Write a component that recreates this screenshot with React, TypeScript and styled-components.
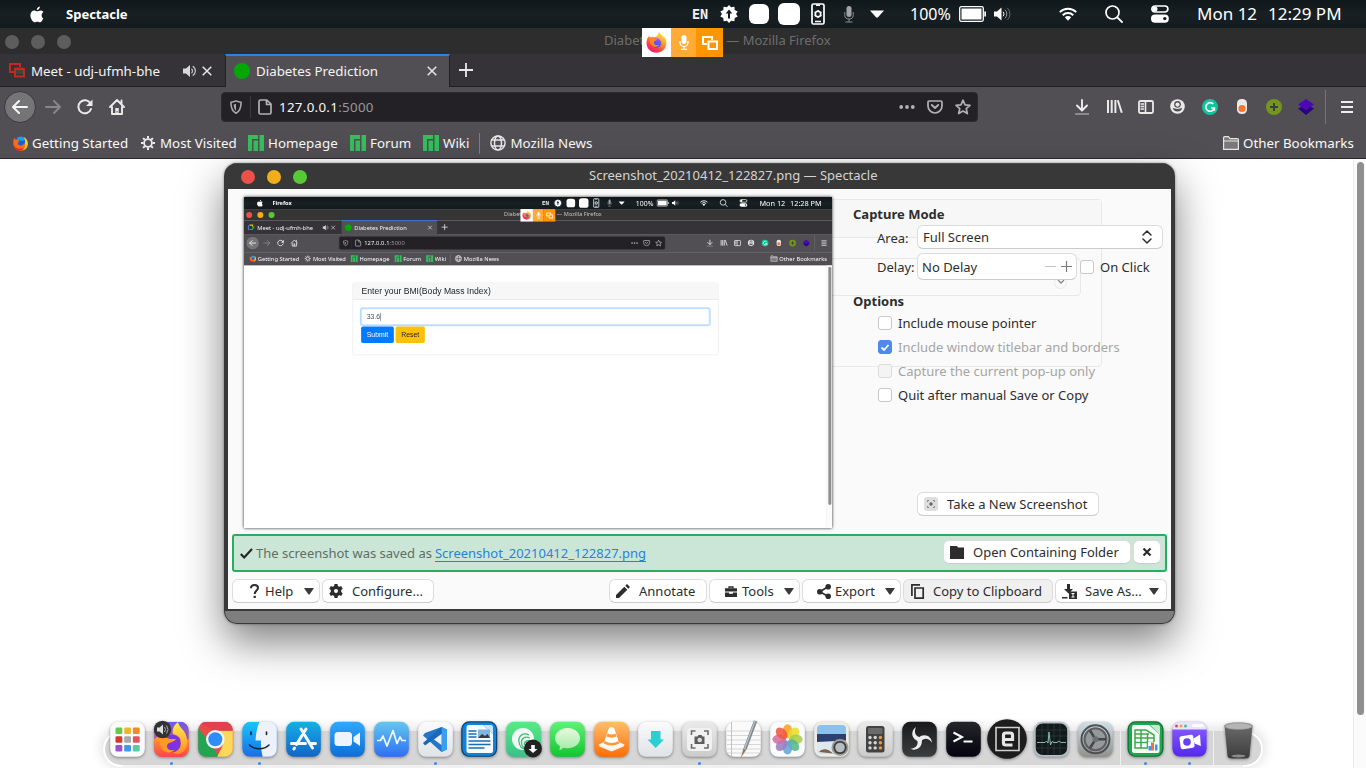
import React from "react";
import styled, { createGlobalStyle, css } from "styled-components";

const GlobalStyle = createGlobalStyle`
  *, *::before, *::after { box-sizing: border-box; }
  html, body { margin: 0; padding: 0; background: #fff; overflow: hidden; }
  body { font-family: "Noto Sans", "Open Sans", sans-serif; font-size: 13.33px; }
`;

/* ---------- shared primitives ---------- */

const Screen = styled.div`
  position: relative;
  width: 1366px;
  height: 768px;
  overflow: hidden;
  display: flex;
  flex-direction: column;
  background: #fff;
  font-family: "Noto Sans", "Open Sans", sans-serif;
  font-size: 13.33px;
`;

const Label = styled.span<{ $w?: number; $ml?: number; $ls?: number; $c?: string; $b?: boolean; $size?: number }>`
  flex: none;
  white-space: pre;
  line-height: 18px;
  width: ${(p) => (p.$w ? `${p.$w}px` : "auto")};
  margin-left: ${(p) => p.$ml ?? 0}px;
  letter-spacing: ${(p) => p.$ls ?? 0}px;
  color: ${(p) => p.$c ?? "inherit"};
  font-weight: ${(p) => (p.$b ? 700 : 400)};
  font-size: ${(p) => (p.$size ? `${p.$size}px` : "inherit")};
`;

const Svg = styled.svg<{ $ml?: number }>`
  flex: none;
  display: block;
  overflow: visible;
  margin-left: ${(p) => p.$ml ?? 0}px;
`;

type IconProps = { w: number; h: number; ml?: number; children: React.ReactNode };
const Icon = ({ w, h, ml, children }: IconProps) => (
  <Svg width={w} height={h} viewBox={`0 0 ${w} ${h}`} $ml={ml} fill="none">
    {children}
  </Svg>
);

const Divider = styled.i<{ $h: number; $ml: number; $c: string }>`
  flex: none;
  width: 1px;
  height: ${(p) => p.$h}px;
  margin-left: ${(p) => p.$ml}px;
  background: ${(p) => p.$c};
`;

/* ---------- system menu bar ---------- */

const MenuBarRow = styled.header`
  flex: none;
  height: 28px;
  display: flex;
  align-items: center;
  color: #fff;
  background: linear-gradient(#10171a, #182024 50%, #141b1e);
`;

const LangTag = styled.span`
  flex: none;
  width: 16px;
  margin-left: auto;
  font: 700 13.5px/18px "DejaVu Sans Mono", monospace;
  letter-spacing: -0.1px;
  color: #f2f2f2;
`;

const WhiteTile = styled.i<{ $s: number; $ml: number }>`
  flex: none;
  width: ${(p) => p.$s}px;
  height: ${(p) => p.$s}px;
  margin-left: ${(p) => p.$ml}px;
  border-radius: 6px;
  background: #fff;
`;

const MenuBar = ({ app, time }: { app: string; time: string }) => (
  <MenuBarRow>
    <Icon w={14} h={17} ml={30}>
      <path fill="#fff" d="M9.9.5c.1 1.9-1.300 3.500-3.100 3.600C6.600 2.300 8.100.7 9.900.5zM13.300 12.300c-.8 2.100-2 4-3.200 4-1 0-1.400-.6-2.700-.6s-1.700.6-2.700.6C3.100 16.300.4 12.800.4 9.200c0-3 1.900-4.700 3.700-4.700 1.300 0 2.200.8 3.100.8.8 0 1.900-.9 3.400-.9 1 0 2.100.5 2.800 1.500-2.500 1.500-2.100 5.300-.1 6.400z" />
    </Icon>
    <Label $ml={22} $w={64} $b $size={13}>{app}</Label>
    <LangTag>EN</LangTag>
    <Icon w={18} h={18} ml={12}>
      <path fill="#fff" d="M9 0l2.100 2.300 3.300-.5.3 3.200 3 1.400L16 9l1.700 2.600-3 1.400-.3 3.200-3.300-.5L9 18l-2.100-2.300-3.300.5-.3-3.200-3-1.400L2 9 .3 6.400l3-1.400.3-3.200 3.300.5z" />
      <path fill="#141b1e" d="M9 4.500l3.300 4H10v5H8v-5H5.700z" />
    </Icon>
    <WhiteTile $s={20} $ml={11} />
    <WhiteTile $s={22} $ml={9} />
    <Icon w={14} h={22} ml={11}>
      <rect x="1" y="1" width="12" height="20" rx="1.500" stroke="#fff" strokeWidth="1.700" />
      <circle cx="7" cy="11" r="2.700" stroke="#fff" strokeWidth="1.600" />
      <path stroke="#fff" strokeWidth="1.400" d="M4 18.500h6M5 2.200h4M7 7v1.500M7 13.500V15M3.600 9l1.300.8M9.200 12.200l1.300.8M3.600 13l1.300-.8M9.200 9.800l1.300-.8" />
    </Icon>
    <Icon w={10} h={17} ml={19}>
      <rect x="2.500" y="0" width="5" height="11" rx="2.500" fill="#a3a5a6" />
      <path stroke="#8a8d8e" d="M.8 6v3.500a4.200 3.500 0 0 0 8.400 0V6M5 13v3M1.500 16h7" />
    </Icon>
    <Icon w={14} h={8} ml={16}><path fill="#fff" d="M0 .5h14L8 7.200q-1 .9-2 0z" /></Icon>
    <Label $ml={26} $w={42} $size={16}>100%</Label>
    <Icon w={27} h={16} ml={7}>
      <rect x=".7" y=".7" width="23.600" height="14.600" rx="1.500" stroke="#fff" strokeWidth="1.300" />
      <rect x="2.500" y="2.500" width="20" height="11" fill="#fff" />
      <path fill="#fff" d="M25.300 5.500h1.700v5h-1.700z" />
    </Icon>
    <Icon w={17} h={14} ml={8}>
      <path fill="#fff" d="M0 4.500h3L7.500.5v13L3 9.500H0z" />
      <path stroke="#fff" d="M9 4.700a3.300 3.300 0 0 1 0 4.600" />
      <path stroke="#9b9fa1" d="M11 2.700a6 6 0 0 1 0 8.600" />
      <path stroke="#666c6e" d="M13.400 1a8.500 8.500 0 0 1 0 12" />
    </Icon>
    <Icon w={18} h={14} ml={48}>
      <path stroke="#fff" strokeWidth="2" d="M.8 5.100a11.800 11.800 0 0 1 16.400 0M3.700 8.200a7.600 7.600 0 0 1 10.600 0" />
      <path fill="#fff" d="M5.800 10.300a4.600 4.600 0 0 1 6.400 0L9 13.800z" />
    </Icon>
    <Icon w={18} h={18} ml={28}>
      <circle cx="7.500" cy="7.500" r="6.500" stroke="#fff" strokeWidth="1.700" />
      <path stroke="#fff" strokeWidth="1.900" d="M12.300 12.300l5.300 5.300" />
    </Icon>
    <Icon w={18} h={18} ml={28}>
      <rect x=".9" y="1" width="16" height="6" rx="3" stroke="#fff" strokeWidth="1.700" />
      <circle cx="4" cy="4" r="2.500" fill="#fff" />
      <rect x="0" y="9.500" width="17.800" height="8.300" rx="4.100" fill="#fff" />
      <circle cx="13.800" cy="13.600" r="1.700" fill="#141b1e" />
    </Icon>
    <Label $ml={28} $w={71} $size={17}>Mon 12</Label>
    <Label $w={98} $size={17}>{time}</Label>
  </MenuBarRow>
);

/* ---------- browser ---------- */

const TitleBar = styled.div<{ $active: boolean }>`
  flex: none;
  height: 26px;
  display: flex;
  align-items: center;
  padding-left: 5px;
  gap: 12px;
  color: ${(p) => (p.$active ? "#c4c4c4" : "#6d6d6d")};
  background: ${(p) => (p.$active ? "#353535" : "#2d2d2d")};
`;

const Dot = styled.i<{ $c: string }>`
  flex: none;
  width: 14px;
  height: 14px;
  border-radius: 50%;
  background: ${(p) => p.$c};
  margin-top: 1px;
`;

const WinTitle = styled.div`
  flex: 1;
  padding: 0 0 2px 521px;
  font-size: 13px;
  line-height: 18px;
  white-space: nowrap;
  display: flex;
`;

const TabStrip = styled.div`
  flex: none;
  height: 33px;
  display: flex;
  align-items: stretch;
  background: #353338;
  border-bottom: 1px solid #222025;
  color: #f4f4f5;
`;

const Tab = styled.div<{ $active?: boolean }>`
  width: 225px;
  height: 33px;
  display: flex;
  align-items: center;
  padding-left: 9px;
  ${(p) =>
    p.$active &&
    css`
      background: #514f54;
      border-top: 2px solid #2f7fe8;
      border-left: 1px solid #222025;
      border-right: 1px solid #222025;
      padding-left: 8px;
      padding-bottom: 2px;
    `}
`;

const NavBar = styled.div`
  flex: none;
  height: 41px;
  display: flex;
  align-items: center;
  padding-bottom: 2px;
  background: #514f54;
  color: #f4f4f5;
`;

const BackButton = styled.div`
  flex: none;
  width: 32px;
  height: 32px;
  margin-left: 4px;
  border-radius: 50%;
  background: #757477;
  border: 1px solid #3a383c;
  display: flex;
  align-items: center;
  justify-content: center;
`;

const UrlBar = styled.div`
  flex: none;
  width: 757px;
  height: 30px;
  margin-left: 96px;
  display: flex;
  align-items: center;
  border-radius: 4px;
  background: #232126;
  border: 1px solid #2d2b31;
`;

const BookmarkBar = styled.div`
  flex: none;
  height: 31px;
  display: flex;
  align-items: center;
  background: #514f54;
  border-bottom: 1px solid #2a282c;
  color: #fafafa;
`;

const Page = styled.main`
  flex: 1;
  display: flex;
  justify-content: space-between;
  background: #fff;
`;

const ScrollTrack = styled.div`
  width: 13px;
  padding: 3px 2px 0 3px;
  background: #fbfbfb;
  border-left: 1px solid #ececec;
`;

const ScrollThumb = styled.div`
  width: 7px;
  height: 553px;
  border-radius: 4px;
  background: #8f8f8f;
`;

const ShareBadge = styled.div`
  position: absolute;
  z-index: 2;
  left: 642px;
  top: 28px;
  width: 81px;
  height: 29px;
  display: flex;
`;

const ShareCell = styled.div<{ $w: number; $bg: string }>`
  width: ${(p) => p.$w}px;
  background: ${(p) => p.$bg};
  display: flex;
  align-items: center;
  justify-content: center;
`;

const NewTab = styled.div`display: flex; align-items: center; padding-bottom: 1px;`;
const UrlActions = styled.div`margin-left: auto; display: flex; align-items: center; padding-right: 6px;`;
const OtherBookmarks = styled.div`margin-left: auto; display: flex; align-items: center; padding-right: 13px;`;
const PageBody = styled.div`flex: 1; padding: 40px 0 0 252px;`;

const FirefoxMark = ({ s, ml }: { s: number; ml?: number }) => (
  <Svg width={s} height={s} viewBox="0 0 20 20" $ml={ml}>
    <defs>
      <linearGradient id="foxBody" x1=".8" y1="0" x2=".2" y2="1">
        <stop offset="0" stopColor="#fff04a" />
        <stop offset=".4" stopColor="#ff9a1f" />
        <stop offset=".75" stopColor="#ff3750" />
        <stop offset="1" stopColor="#e31587" />
      </linearGradient>
      <linearGradient id="foxGlobe" x1=".7" y1="0" x2=".3" y2="1">
        <stop offset="0" stopColor="#9059ff" />
        <stop offset="1" stopColor="#3a4fd0" />
      </linearGradient>
    </defs>
    <path fill="url(#foxBody)" d="M1.200 6.300C1.800 5 2.300 4.300 3.300 3.500c0 .8.100 1.200.4 1.700C5 4.300 6.800 4.600 8 5c1-.6 2-1.200 3-1.200-.3-1.300.7-2.900 2.100-3.700.2 2 2 2.900 3.600 4.900.4-.3.400-.7.3-1.300 2 2.500 2.700 4.800 2.400 7.500-.5 5-4.500 8.600-9.400 8.600C4.800 19.800.6 15.800.5 10.700c0-1.600.2-3 .7-4.400z" />
    <circle cx="10" cy="10.500" r="4.500" fill="url(#foxGlobe)" />
    <path fill="#ff8a1c" d="M3.600 6.500c1.600-1 3.400-.9 4.600-.4 1 .4 2.200.5 3 .5-.6 1.100-2.300 1.300-3.300 2.200-.9 1-.4 2.500.7 3.300 1.300.8 2.700.1 3.800.4-1 1.500-3.600 2-5.600 1C4.300 12.300 3.100 9.400 3.600 6.500z" />
  </Svg>
);

/* older globe-and-fox favicon of the "Getting Started" bookmark */
const FoxFavicon = () => (
  <Icon w={15} h={15} ml={13}>
    <circle cx="8" cy="7" r="6.300" fill="#1c5fd0" />
    <path fill="#12a5f0" d="M4 1.800C6 .3 10.500.2 12.500 2.500L10 5 5 4z" />
    <path fill="#ff6a1a" d="M.6 3.500L1.600 2l1 1.700C4 3.300 5.500 4 6.500 5L5 6.600c-.6 2 1 3.200 3 3 1.500-.3 2.300-1.200 4-2.600.8-2.300.2-4-.8-5.200 2.700 1.500 3.800 3.800 3.600 6.400-.3 3.800-3.300 6.600-7 6.600C3.500 14.800.3 11.500.2 7.500z" />
    <path fill="#ffc928" d="M10.800 1c3 1.700 4.200 4.400 4 7.200-.2 2.800-1.800 5-4.300 6C12.500 11 12.700 5 10.800 1z" />
    <path fill="#e8272c" d="M.2 7.500c.8 3 3 5 6.300 5.300 1.500.1 3-.3 4-1-1 2-2.300 2.800-4.200 2.900C3 14 .3 11 .2 7.500z" />
  </Icon>
);

const Manjaro = ({ ml }: { ml: number }) => (
  <Icon w={16} h={16} ml={ml}>
    <path fill="#35bf5c" d="M0 0h10v4H4v12H0zM5.500 5.500H10V16H5.500zM11.500 0H16v16h-4.500z" />
  </Icon>
);

const CloseX = ({ ml }: { ml: number }) => (
  <Icon w={10} h={10} ml={ml}><path stroke="#e6e6e6" strokeWidth="1.500" d="M.7.700l8.600 8.600M9.300.700L.7 9.300" /></Icon>
);

const SharingIcon = () => (
  <Icon w={16} h={15}>
    <path fill="#3c4640" d="M6 4h8v7H6z" />
    <path stroke="#c5281c" strokeWidth="2" d="M5 9H1V1h10v3" />
    <path stroke="#c5281c" strokeWidth="2" d="M6 6h9v7.500H6z" />
  </Icon>
);

const MeetIcon = () => (
  <Icon w={16} h={15}>
    <path fill="#e04a3a" d="M0 4l4-3v3z" />
    <path stroke="#f0b92a" strokeWidth="2.600" d="M4 2.300h7V6" />
    <path stroke="#3b7de0" strokeWidth="2.600" d="M1.300 4.500v8H4" />
    <path stroke="#2f9e4d" strokeWidth="2.600" d="M4 12.500h7V9" />
    <path fill="#2f9e4d" d="M10 7l5-4v9z" />
  </Icon>
);

const Browser = ({ active, children }: { active: boolean; children?: React.ReactNode }) => (
  <>
    <TitleBar $active={active}>
      <Dot $c={active ? "#e9514a" : "#5d5d5d"} />
      <Dot $c={active ? "#f1ae1b" : "#5d5d5d"} />
      <Dot $c={active ? "#57c836" : "#5d5d5d"} />
      <WinTitle><Label>Diabetes Prediction — Mozilla Firefox</Label></WinTitle>
    </TitleBar>
    <TabStrip>
      <Tab>
        {active ? <MeetIcon /> : <SharingIcon />}
        <Label $ml={6} $w={152}>Meet - udj-ufmh-bhe</Label>
        <Icon w={14} h={12}>
          <path fill="#d9d9da" d="M0 3.500h3L7 0v12L3 8.500H0z" />
          <path stroke="#c9c9ca" strokeWidth="1.200" d="M8.500 3.800a3 3 0 0 1 0 4.400M9.700 1.300a5.500 5.500 0 0 1 0 9.400" />
        </Icon>
        <CloseX ml={5} />
      </Tab>
      <Tab $active>
        <Icon w={16} h={16}><circle cx="8" cy="8" r="8" fill="#04a804" /></Icon>
        <Label $ml={6} $w={171}>Diabetes Prediction</Label>
        <CloseX ml={0} />
      </Tab>
      <NewTab>
        <Icon w={14} h={14} ml={9}><path stroke="#e8e8e8" strokeWidth="1.800" d="M7 0v14M0 7h14" /></Icon>
      </NewTab>
    </TabStrip>
    <NavBar>
      <BackButton>
        <Icon w={16} h={14}><path stroke="#f5f5f5" strokeWidth="2" strokeLinejoin="round" strokeLinecap="round" d="M15 7H1.500M7 1L1 7l6 6" /></Icon>
      </BackButton>
      <Icon w={16} h={14} ml={9}><path stroke="#88868b" strokeWidth="2" strokeLinejoin="round" strokeLinecap="round" d="M1 7h13.500M9 1l6 6-6 6" /></Icon>
      <Icon w={16} h={16} ml={16}>
        <path stroke="#eaeaea" strokeWidth="2" strokeLinecap="round" d="M13.500 4.500A6.500 6.500 0 1 0 14 10" />
        <path fill="#eaeaea" d="M15.500.5V7H9z" />
      </Icon>
      <Icon w={16} h={16} ml={16}>
        <path stroke="#eaeaea" strokeWidth="1.900" strokeLinejoin="round" strokeLinecap="round" d="M1 8l7-7 7 7M3 8v7h10V8M12.500 1.500V5" />
        <path fill="#eaeaea" d="M6.300 9h3.400v6H6.300z" />
        <path fill="#514f54" d="M7.600 12h1v1.500h-1z" />
      </Icon>
      <UrlBar>
        <Icon w={12} h={14} ml={8}>
          <path stroke="#a9a8ab" strokeWidth="1.600" strokeLinejoin="round" d="M6 .9c1.700.8 3.300 1.200 5.100 1.300 0 5-.8 8.800-5.100 11C1.700 11 .9 7.200.9 2.200 2.700 2.100 4.300 1.700 6 .9z" />
          <path fill="#a9a8ab" d="M6 3.700c-.9.400-1.500.6-2.300.7.100 3 .7 5 2.300 6.400z" />
        </Icon>
        <Divider $h={22} $ml={8} $c="#3b393e" />
        <Icon w={14} h={16} ml={7}>
          <path stroke="#b1b1b3" strokeWidth="1.700" strokeLinejoin="round" d="M2.500 1h6.300L13 5.200V13.500Q13 15 11.500 15h-9Q1 15 1 13.500v-11Q1 1 2.500 1zM8.500 1v4.500H13" />
        </Icon>
        <Label $ml={7} $c="#f5f5f6" $ls={0.3}>127.0.0.1</Label>
        <Label $c="#98979b" $ls={0.3}>:5000</Label>
        <UrlActions>
          <Icon w={16} h={4}><g fill="#b1b1b3"><circle cx="2.200" cy="2" r="1.900" /><circle cx="8" cy="2" r="1.900" /><circle cx="13.800" cy="2" r="1.900" /></g></Icon>
          <Icon w={16} h={14} ml={12}>
            <path stroke="#b1b1b3" strokeWidth="1.700" d="M2.200 1h11.600q1.200 0 1.200 1.200V6a7 7 0 0 1-14 0V2.200Q1 1 2.200 1z" />
            <path stroke="#b1b1b3" strokeWidth="1.900" strokeLinecap="round" strokeLinejoin="round" d="M4.800 5L8 8l3.200-3" />
          </Icon>
          <Icon w={16} h={16} ml={12}>
            <path stroke="#b1b1b3" strokeWidth="1.700" strokeLinejoin="round" d="M8 1.200l2 4.600 5 .5-3.800 3.300 1.200 5L8 12l-4.400 2.600 1.200-5L1 6.300l5-.5z" />
          </Icon>
        </UrlActions>
      </UrlBar>
      <Icon w={14} h={16} ml={97}>
        <path stroke="#ededed" strokeWidth="1.900" strokeLinecap="round" strokeLinejoin="round" d="M7 1v10M2 6.500l5 5 5-5" />
        <path stroke="#8b8990" strokeWidth="2" d="M0 15h14" />
        <path stroke="#4a8df0" strokeWidth="2" d="M0 15h1" />
      </Icon>
      <Icon w={16} h={15} ml={18}>
        <path stroke="#eaeaea" strokeWidth="2" d="M1 1v13M4.700 1v13M8.400 1v13M10.800 1.300l4 12.500" />
      </Icon>
      <Icon w={16} h={14} ml={15}>
        <rect x="1" y="1" width="14" height="12" rx="1.500" stroke="#eaeaea" strokeWidth="1.800" />
        <path stroke="#eaeaea" strokeWidth="1.600" d="M7.500 1v12M2.500 4H6M2.500 6.500H6M2.500 9H6" />
      </Icon>
      <Icon w={15} h={15} ml={16}>
        <circle cx="7.500" cy="7.500" r="7.300" fill="#eaeaea" />
        <circle cx="7.500" cy="5.300" r="3.400" fill="#514f54" />
        <circle cx="7.500" cy="5.600" r="2.100" fill="#eaeaea" />
        <path fill="#514f54" d="M2.800 8.800c2.400 1.500 7 1.500 9.400 0-.3 2.500-2.200 3.800-4.700 3.800S3.100 11.300 2.800 8.800z" />
      </Icon>
      <Icon w={16} h={16} ml={17}>
        <circle cx="8" cy="8" r="8" fill="#11c39a" />
        <path stroke="#fff" strokeWidth="1.600" d="M11.300 5A4.300 4.300 0 1 0 12.200 9.500M9 9h3.400v2.800" />
      </Icon>
      <Icon w={10} h={15} ml={19}>
        <rect width="10" height="15" rx="4.500" fill="#e9e9ea" />
        <circle cx="5" cy="9.500" r="3.600" fill="#f5782a" />
      </Icon>
      <Icon w={16} h={16} ml={19}>
        <circle cx="8" cy="8" r="8" fill="#74961d" />
        <path stroke="#3d3c40" strokeWidth="2" d="M8 4v8M4 8h8" />
      </Icon>
      <Icon w={16} h={16} ml={16}>
        <path fill="#24067a" d="M0 9.500l8-4 8 4L8 16z" />
        <path fill="#4c08b5" d="M0 5.500L8 0l8 5.500L8 11.500z" />
      </Icon>
      <Divider $h={34} $ml={11} $c="#77757a" />
      <Icon w={12} h={12} ml={15}><path stroke="#ededed" strokeWidth="2" d="M0 1h12M0 6h12M0 11h12" /></Icon>
    </NavBar>
    <BookmarkBar>
      <FoxFavicon />
      <Label $ml={4} $w={109} $ls={0.02}>Getting Started</Label>
      <Icon w={14} h={14}>
        <circle cx="7" cy="7" r="3.900" stroke="#eaeaea" strokeWidth="1.800" />
        <path stroke="#eaeaea" strokeWidth="2" d="M7 0v2.500M7 11.500V14M0 7h2.500M11.500 7H14M2.100 2.100l1.700 1.700M10.200 10.200l1.700 1.700M2.100 11.900l1.700-1.700M10.200 3.800l1.700-1.700" />
      </Icon>
      <Label $ml={5} $w={88}>Most Visited</Label>
      <Manjaro ml={0} />
      <Label $ml={4} $w={82} $ls={0.05}>Homepage</Label>
      <Manjaro ml={0} />
      <Label $ml={4} $w={53}>Forum</Label>
      <Manjaro ml={0} />
      <Label $ml={4} $w={36}>Wiki</Label>
      <Divider $h={21} $ml={0} $c="#7f7d82" />
      <Icon w={16} h={16} ml={10}>
        <g stroke="#e8e8e8" strokeWidth="1.500">
          <circle cx="8" cy="8" r="7.100" /><ellipse cx="8" cy="8" rx="3.500" ry="7.100" /><path d="M1.700 5h12.600M1.700 11h12.600" />
        </g>
      </Icon>
      <Label $ml={4.5}>Mozilla News</Label>
      <OtherBookmarks>
        <Icon w={16} h={14}>
          <path fill="#79787b" stroke="#e6e6e6" strokeWidth="1.200" strokeLinejoin="round" d="M.6 13.400V1.600Q.6.600 1.600.6h3.800L7 2.600h7.400q1 0 1 1v9.800zM.6 5h14.800" />
        </Icon>
        <Label $ml={4} $w={110}>Other Bookmarks</Label>
      </OtherBookmarks>
    </BookmarkBar>
    <Page>
      <PageBody>{children}</PageBody>
      <ScrollTrack><ScrollThumb /></ScrollTrack>
    </Page>
    <ShareBadge>
      <ShareCell $w={29} $bg="#fff"><FirefoxMark s={21} /></ShareCell>
      <ShareCell $w={25} $bg="#ffab35">
        <Icon w={10} h={15}>
          <rect x="2.500" width="5" height="9" rx="2.500" fill="#fff" />
          <path stroke="#fff" strokeWidth="1.300" d="M1 6v1.500a4 4 0 0 0 8 0V6M5 11.500v3M2 14.300h6" />
        </Icon>
      </ShareCell>
      <ShareCell $w={27} $bg="#ff9503">
        <Icon w={16} h={14}>
          <path stroke="#fff" strokeWidth="2" d="M5 8H1V1h9v3" />
          <path stroke="#fff" strokeWidth="2" d="M6.500 5.500H15V13H6.500z" />
        </Icon>
      </ShareCell>
    </ShareBadge>
  </>
);

/* ---------- BMI form inside the captured page ---------- */

const Card = styled.div`
  width: 850px;
  height: 168px;
  border: 1px solid #dfdfdf;
  border-radius: 4px;
  font-family: "Liberation Sans", Arial, sans-serif;
  color: #212529;
`;
const CardHead = styled.div`
  height: 39px;
  padding-left: 20px;
  font-size: 20px;
  line-height: 38px;
  background: #f7f7f7;
  border-bottom: 1px solid #dfdfdf;
`;
const CardBody = styled.div`padding: 20px 20px 0 19px;`;
const BmiInput = styled.div`
  height: 38px;
  border: 1px solid #80bdff;
  box-shadow: 0 0 0 3px #bfdeff;
  border-radius: 4px;
  padding-left: 12px;
  font-size: 16px;
  line-height: 36px;
  color: #495057;
`;
const Caret = styled.i`display: inline-block; width: 1px; height: 19px; background: #222; vertical-align: middle;`;
const FormButtons = styled.div`display: flex; gap: 4px; margin-top: 4px;`;
const FormButton = styled.div<{ $bg: string; $c: string; $w: number }>`
  width: ${(p) => p.$w}px;
  height: 38px;
  border-radius: 4px;
  font-size: 16px;
  line-height: 37px;
  text-align: center;
  color: ${(p) => p.$c};
  background: ${(p) => p.$bg};
`;

/* ---------- capture tool window ---------- */

const ToolWindow = styled.section`
  position: absolute;
  left: 224px;
  top: 163px;
  width: 951px;
  height: 461px;
  display: flex;
  flex-direction: column;
  overflow: hidden;
  border-radius: 13px;
  background: #383838;
  color: #2d2d2d;
  font-size: 13px;
`;
const WindowShadow = styled.div`
  position: absolute;
  left: 224px;
  top: 163px;
  width: 951px;
  height: 461px;
  border-radius: 13px;
  box-shadow: 0 18px 42px rgba(0, 0, 0, 0.5), 0 0 3px rgba(0, 0, 0, 0.4);
`;
const ToolTitle = styled.div`
  flex: none;
  height: 26px;
  display: flex;
  align-items: center;
  padding-left: 17px;
  gap: 12px;
  color: #d4d4d4;
  border-top: 1px solid #4d4d4d;
`;
const ToolTitleText = styled.div`padding: 0 0 3px 270px; line-height: 18px; display: flex;`;
const ToolBody = styled.div`
  flex: none;
  position: relative;
  height: 420px;
  margin: 0 4px;
  background: #fafafa;
`;
const ToolFoot = styled.div`
  flex: 1;
  margin: 2px 1px 1px;
  border-radius: 0 0 12px 12px;
  background: #7e7e7e;
`;
const GhostBox = styled.div<{ $w: number; $t: number; $h: number }>`
  position: absolute;
  left: 600px;
  top: ${(p) => p.$t}px;
  width: ${(p) => p.$w}px;
  height: ${(p) => p.$h}px;
  border: 1px solid #e8e8e8;
  border-radius: 0 4px 4px 0;
`;
const GhostHead = styled.div`height: 38px; border-bottom: 1px solid #e8e8e8; background: #f7f7f7;`;
const GhostKnob = styled.div`
  position: absolute;
  left: 826px;
  top: 87px;
  width: 13px;
  height: 13px;
  padding-bottom: 2px;
  border: 1px solid #eaeaea;
  border-radius: 50%;
  display: flex;
  align-items: center;
  justify-content: center;
`;

const ToolMain = styled.div`
  position: relative;
  height: 345px;
  display: flex;
  padding: 8px 9px 0 16px;
`;
const Preview = styled.div`
  flex: none;
  width: 588px;
  height: 331px;
  overflow: hidden;
  background: #fff;
  box-shadow: 0 0 3px rgba(0, 0, 0, 0.85);
`;
const PreviewScale = styled.div`
  transform: scale(0.4306);
  transform-origin: 0 0;
  width: 1366px;
  height: 768px;
`;
const Settings = styled.div`
  flex: 1;
  display: flex;
  flex-direction: column;
  padding-left: 21px;
`;
const Heading = styled.div<{ $mt: number }>`
  margin-top: ${(p) => p.$mt}px;
  height: 18px;
  line-height: 18px;
  font-weight: 700;
`;
const Field = styled.div<{ $h: number; $mt: number }>`
  height: ${(p) => p.$h}px;
  margin-top: ${(p) => p.$mt}px;
  display: flex;
  align-items: center;
  padding-left: 24px;
`;
const control = css`
  background: #fff;
  border: 1px solid #dcdcdc;
  border-bottom-color: #cbcbcb;
  border-radius: 6px;
  display: flex;
  align-items: center;
`;
const AreaLabel = styled.div`flex: none; width: 40px; padding-top: 2px; line-height: 18px;`;
const Combo = styled.div`
  ${control}
  width: 246px;
  flex: none;
  height: 24px;
  padding: 0 10px 0 5px;
  justify-content: space-between;
`;
const Spin = styled.div`
  ${control}
  flex: none;
  width: 160px;
  height: 27px;
  padding: 0 4px 0 4px;
`;
const Check = styled.i<{ $on?: boolean; $off?: boolean; $ml?: number }>`
  flex: none;
  width: 14px;
  height: 14px;
  margin-left: ${(p) => p.$ml ?? 1}px;
  border: 1px solid ${(p) => (p.$on ? "#4c89ee" : p.$off ? "#dcdcdc" : "#c9c9c9")};
  border-radius: 3px;
  background: ${(p) => (p.$on ? "#4c8af0" : p.$off ? "#f4f4f4" : "#fff")};
  display: flex;
  align-items: center;
  justify-content: center;
`;
const Button = styled.div<{ $w: number; $pl: number; $down?: boolean }>`
  ${control}
  flex: none;
  width: ${(p) => p.$w}px;
  height: 24px;
  padding-left: ${(p) => p.$pl}px;
  ${(p) => p.$down && "background: #f0f0f0;"}
`;
const TakeRow = styled.div`margin: auto 0 18px 64px;`;

const Message = styled.div`
  height: 38px;
  margin: 0 4px;
  display: flex;
  align-items: center;
  padding: 0 4px 0 6px;
  border: 2px solid #27ae60;
  border-radius: 3px;
  background: #cbe6d7;
  color: #5f6e66;
`;
const FileLink = styled.span`
  margin-left: 3px;
  color: #2b80d8;
  line-height: 16px;
  border-bottom: 1px solid #2b80d8;
`;
const MessageActions = styled.div`margin-left: auto; display: flex; gap: 2px; color: #2d2d2d; margin-top: -2px;`;
const Footer = styled.div`
  display: flex;
  gap: 2px;
  padding: 7px 4px 0;
`;
const FooterRight = styled.div`display: flex; gap: 2px; margin-left: auto;`;

const Arrow = () => (
  <Icon w={10} h={7}><path fill="#3a3a3a" d="M0 0h10L5.500 6.500h-1z" /></Icon>
);

const CaptureWindow = () => (
  <>
    <WindowShadow />
    <ToolWindow>
      <ToolTitle>
        <Dot $c="#e9514a" />
        <Dot $c="#f1ae1b" />
        <Dot $c="#57c836" />
        <ToolTitleText>Screenshot_20210412_122827.png — Spectacle</ToolTitleText>
      </ToolTitle>
      <ToolBody>
        <GhostBox $w={274} $t={10} $h={168}><GhostHead /></GhostBox>
        <GhostBox $w={253} $t={69} $h={38} />
        <GhostKnob>
          <Icon w={6} h={4}><path stroke="#888" strokeWidth="1.300" d="M0 0l3 3 3-3" /></Icon>
        </GhostKnob>
        <ToolMain>
          <Preview>
            <PreviewScale>
              <Screen>
                <MenuBar app="Firefox" time="12:28 PM" />
                <Browser active>
                  <Card>
                    <CardHead>Enter your BMI(Body Mass Index)</CardHead>
                    <CardBody>
                      <BmiInput>33.6<Caret /></BmiInput>
                      <FormButtons>
                        <FormButton $w={76} $bg="#007bff" $c="#fff">Submit</FormButton>
                        <FormButton $w={68} $bg="#ffc107" $c="#212529">Reset</FormButton>
                      </FormButtons>
                    </CardBody>
                  </Card>
                </Browser>
              </Screen>
            </PreviewScale>
          </Preview>
          <Settings>
            <Heading $mt={8}>Capture Mode</Heading>
            <Field $h={24} $mt={2}>
              <AreaLabel>Area:</AreaLabel>
              <Combo>
                <Label>Full Screen</Label>
                <Icon w={10} h={14}>
                  <path stroke="#2d2d2d" strokeWidth="1.500" strokeLinecap="round" strokeLinejoin="round" d="M1 5l4-4 4 4M1 9l4 4 4-4" />
                </Icon>
              </Combo>
            </Field>
            <Field $h={27} $mt={4}>
              <Label $w={40}>Delay:</Label>
              <Spin>
                <Label $w={123}>No Delay</Label>
                <Icon w={11} h={11}><path stroke="#c4c4c4" d="M0 5.500h11" /></Icon>
                <Icon w={11} h={11} ml={5}><path stroke="#7a7a7a" strokeWidth="1.200" d="M0 5.500h11M5.500 0v11" /></Icon>
              </Spin>
              <Check $ml={3} />
              <Label $ml={6}>On Click</Label>
            </Field>
            <Heading $mt={12}>Options</Heading>
            <Field $h={24} $mt={1}><Check /><Label $ml={6}>Include mouse pointer</Label></Field>
            <Field $h={24} $mt={0}>
              <Check $on><Icon w={8} h={7}><path stroke="#fff" strokeWidth="1.800" d="M.5 3.500l2.500 2.500L7.500 1" /></Icon></Check>
              <Label $ml={6} $c="#a5a5a5">Include window titlebar and borders</Label>
            </Field>
            <Field $h={24} $mt={0}><Check $off /><Label $ml={6} $c="#a5a5a5">Capture the current pop-up only</Label></Field>
            <Field $h={24} $mt={0}><Check /><Label $ml={6}>Quit after manual Save or Copy</Label></Field>
            <TakeRow>
              <Button $w={182} $pl={6}>
                <Icon w={14} h={14}>
                  <rect width="14" height="14" rx="3" fill="#dedede" />
                  <path stroke="#888" d="M3.500 5V3.500H5M9 3.500h1.500V5M10.500 9v1.500H9M5 10.500H3.500V9" />
                  <circle cx="7" cy="7" r="1.700" fill="#666" />
                </Icon>
                <Label $ml={9}>Take a New Screenshot</Label>
              </Button>
            </TakeRow>
          </Settings>
        </ToolMain>
        <Message>
          <Icon w={13} h={11}><path stroke="#262626" strokeWidth="2.200" d="M.8 6l3.400 3.500L12 1" /></Icon>
          <Label $ml={3}>The screenshot was saved as</Label>
          <FileLink>Screenshot_20210412_122827.png</FileLink>
          <MessageActions>
            <Button $w={188} $pl={6}>
              <Icon w={14} h={13}><path fill="#2d2d2d" d="M0 0h7l1 1.500h6V13H0z" /></Icon>
              <Label $ml={9}>Open Containing Folder</Label>
            </Button>
            <Button $w={28} $pl={9}>
              <Icon w={8} h={8}><path stroke="#2d2d2d" strokeWidth="2.200" d="M.5.5l7 7M7.500.5l-7 7" /></Icon>
            </Button>
          </MessageActions>
        </Message>
        <Footer>
          <Button $w={88} $pl={17}>
            <Icon w={9} h={14}>
              <path stroke="#2d2d2d" strokeWidth="2" d="M1 4.200C1 2.200 2.400 1 4.500 1S8 2.200 8 4c0 2.500-3.300 2.600-3.300 6" />
              <path fill="#2d2d2d" d="M3.600 11.800h2.200V14H3.600z" />
            </Icon>
            <Label $ml={6} $w={39}>Help</Label>
            <Arrow />
          </Button>
          <Button $w={112} $pl={6}>
            <Icon w={14} h={14}>
              <path fill="#2d2d2d" d="M5.500 0h3l.4 1.900 1.400.8 1.900-.6L13.700 4.700 12.200 6v2l1.500 1.300-1.500 2.600-1.900-.6-1.400.8L8.500 14h-3l-.4-1.900-1.400-.8-1.900.6L.3 9.300 1.800 8V6L.3 4.700l1.500-2.600 1.900.6 1.400-.8z" />
              <circle cx="7" cy="7" r="2" fill="#fff" />
            </Icon>
            <Label $ml={9}>Configure...</Label>
          </Button>
          <FooterRight>
            <Button $w={98} $pl={6}>
              <Icon w={14} h={14}><path fill="#2d2d2d" d="M0 11L8.300 2.700l3 3L3 14H0zM9.300 1.700L11 0l3 3-1.700 1.700z" /></Icon>
              <Label $ml={9}>Annotate</Label>
            </Button>
            <Button $w={91} $pl={15}>
              <Icon w={12} h={11}>
                <path stroke="#2d2d2d" strokeWidth="1.300" d="M4 2.500V1h4v1.500" />
                <path fill="#2d2d2d" d="M0 2.300h12v3.200H0zM0 6.500h4v1.300h4V6.500h4V11H0z" />
              </Icon>
              <Label $ml={5} $w={42}>Tools</Label>
              <Arrow />
            </Button>
            <Button $w={99} $pl={14}>
              <Icon w={14} h={15}>
                <g fill="#2d2d2d"><circle cx="2.800" cy="7.800" r="2.800" /><circle cx="11.200" cy="2.800" r="2.800" /><circle cx="11.200" cy="12.200" r="2.800" /></g>
                <path stroke="#2d2d2d" strokeWidth="1.700" d="M11 2.800L2.800 7.800l8.200 4.400" />
              </Icon>
              <Label $ml={4} $w={50}>Export</Label>
              <Arrow />
            </Button>
            <Button $w={150} $pl={7} $down>
              <Icon w={14} h={15}>
                <path stroke="#2d2d2d" strokeWidth="1.700" d="M.9 12V.9H9M4 4h8.200v10.200H4z" />
              </Icon>
              <Label $ml={8}>Copy to Clipboard</Label>
            </Button>
            <Button $w={112} $pl={6}>
              <Icon w={15} h={15}>
                <path fill="#2d2d2d" d="M5 0h3v5h3L6.500 9.500 2 5h3zM0 13h5.500v1.500H0zM7 7.500h8V15H7z" />
                <path stroke="#fff" d="M9.500 9.500h3M9.500 13h3M11 9.500V13" />
              </Icon>
              <Label $ml={8} $w={64}>Save As...</Label>
              <Arrow />
            </Button>
          </FooterRight>
        </Footer>
      </ToolBody>
      <ToolFoot />
    </ToolWindow>
  </>
);

/* ---------- dock ---------- */

const DockLayer = styled.nav`
  position: absolute;
  left: 104px;
  top: 717px;
  width: 1158px;
  height: 51px;
  display: flex;
  padding-left: 1px;
`;
const DockPlate = styled.div`
  position: absolute;
  left: 104px;
  top: 731px;
  width: 1158px;
  height: 34px;
  border-radius: 16px;
  background: #d6d6d6;
  box-shadow: 0 0 12px 3px rgba(0, 0, 0, 0.12);
`;
const DockFloor = styled.div`
  position: absolute;
  left: 122px;
  top: 765px;
  width: 1122px;
  height: 3px;
  background: #f1f1f1;
`;
const DockCorner = styled.i<{ $side: "left" | "right" }>`
  position: absolute;
  top: 731px;
  ${(p) => p.$side}: 103px;
  width: 20px;
  height: 36px;
  border: 2px solid #fff;
  border-${(p) => (p.$side === "left" ? "right" : "left")}: 0;
  border-radius: ${(p) => (p.$side === "left" ? "18px 0 0 18px" : "0 18px 18px 0")};
`;
const DockItem = styled.div<{ $ml?: number }>`
  flex: none;
  width: 44px;
  margin-left: ${(p) => p.$ml ?? 0}px;
  display: flex;
  flex-direction: column;
  align-items: center;
`;
const RunDot = styled.i`width: 3px; height: 3px; margin-top: 1px; border-radius: 50%; background: #3f86f4;`;
const DockSvg = styled.svg`
  display: block;
  overflow: visible;
  filter: drop-shadow(0 1px 1.500px rgba(0, 0, 0, 0.4));
`;
const DockRule = styled.i`position: absolute; top: 14px; width: 1px; height: 34px; background: #f0f0f0;`;
const RuleA = styled(DockRule)`left: 1016px;`;
const RuleB = styled(DockRule)`left: 1109px;`;

const grads: [string, string, string][] = [
  ["dFox", "#6a5cf0", "#ff4a4a"], ["dStore", "#17aee8", "#1265c4"], ["dZoom", "#2fa8ff", "#0c6fd6"],
  ["dPulse", "#62c8ee", "#2f6ff3"], ["dLight", "#fbfbfc", "#dfe2e7"], ["dTorr", "#58ea84", "#35c389"],
  ["dMsg", "#5ff377", "#12c52e"], ["dVlc", "#ffbe6b", "#ff6d05"], ["dGrey", "#eaeaea", "#cbcbcb"],
  ["dDark", "#17191a", "#3b3d3f"], ["dTerm", "#25262a", "#04020f"], ["dPref", "#cfe0e8", "#93908c"],
  ["dPurple", "#8b62ff", "#5527f0"], ["dTrash", "#6a6a6a", "#3c3c3c"], ["dFinder", "#17c6fb", "#1a6de8"],
  ["dFlame", "#fff14a", "#ff8a22"], ["dBase", "#ff9a28", "#ff3f50"], ["dBubble", "#e6fbe2", "#a5e9a5"],
];

const Defs = () => (
  <defs>
    {grads.map(([id, a, b]) => (
      <linearGradient key={id} id={id} x1="0" y1="0" x2="0" y2="1">
        <stop offset="0" stopColor={a} /><stop offset="1" stopColor={b} />
      </linearGradient>
    ))}
    <clipPath id="tile"><rect x="5.200" y="4.800" width="34.600" height="35" rx="8" /></clipPath>
  </defs>
);

const Tile = ({ f }: { f: string }) => <rect x="5.200" y="4.800" width="34.600" height="35" rx="8" fill={f} />;

const appGrid = ["#63c84b", "#eeb533", "#e98b2f", "#d23a2f", "#a8a9ab", "#e6535f", "#9a51c9", "#3e9ae8", "#5bc9a4"];
const petals = ["#fca01f", "#e8dc2a", "#a6cf49", "#55b886", "#66a5d8", "#9a7fc0", "#d46fa0", "#f0583f"];

const dockIcons: { run?: boolean; ml?: number; art: React.ReactNode }[] = [
  { art: <><Tile f="#fafafa" />{appGrid.map((c, i) => <rect key={c} x={10.500 + (i % 3) * 8.700} y={10.500 + Math.floor(i / 3) * 8.700} width="6.800" height="6.600" rx="1.300" fill={c} />)}</> },
  { run: true, art: <g><g clipPath="url(#tile)"><Tile f="url(#dFox)" />
    <path fill="url(#dBase)" d="M5 22c5-2 9-1 12 1h20l3-1v18H5z" />
    <path fill="url(#dFlame)" d="M24 17c-1-5 1-9 5-12 1 5 5 7 7 11 3 6 3 13-1 18-4 4-9 4-12 0 6-1 10-5 9-10-1-4-4-6-8-7z" />
    <circle cx="23" cy="26.500" r="8.800" fill="#7b35d8" />
    <path fill="#ff9a2a" d="M6 21c4-2 8-2 12 0 3 1.300 6 1.200 9 1-2 4-8 2-9 7 0 4 4 5 8 4-6 5-15 2-15-8z" /></g>
    <circle cx="13.500" cy="12.500" r="8.700" fill="#333" />
    <path fill="#ddd" d="M8 10.500h2.500l3.500-3v10l-3.500-3H8z" /><path stroke="#aaa" fill="none" d="M15.500 10q2 2.500 0 5M17.500 8.500q3 4 0 8" /></g> },
  { art: <g clipPath="url(#tile)"><Tile f="#e94b4b" /><path fill="#22a552" d="M5 11l12.500 15.500L26 40H5z" /><path fill="#fcd85a" d="M22 13.500h18V40H24l6-12z" /><path fill="#dd3c50" d="M5 5h35v9H22z" opacity=".7" />
    <circle cx="22.300" cy="22.300" r="9.300" fill="#f3f3f3" /><circle cx="22.300" cy="22.300" r="7" fill="#2f8df7" /></g> },
  { run: true, art: <g clipPath="url(#tile)"><Tile f="url(#dFinder)" /><path fill="#edf2fa" d="M23 4c-3 6-4 12-4.500 19.500H24C23.700 30 24.500 35 26 41h15V4z" />
    <path stroke="#1d2430" strokeWidth="1.600" fill="none" strokeLinecap="round" d="M14 15v2.500M29.500 15v2.500M12.500 28c5 5 14.500 5 19.500 0" /></g> },
  { art: <><Tile f="url(#dStore)" /><path stroke="#f3f8fd" strokeWidth="3" strokeLinecap="round" fill="none" d="M20 12l11.500 19M25 12L15.500 27.500M10.500 26.500h14M29.500 26.500h5M13.500 31l-.6 1" /></> },
  { art: <><Tile f="url(#dZoom)" /><rect x="9.500" y="15" width="17.500" height="14" rx="3.500" fill="#edf4fc" /><path fill="#edf4fc" d="M28.500 20l6.500-4.500v13.500L28.500 24.500z" /></> },
  { art: <><Tile f="url(#dPulse)" /><path stroke="#f4f8ff" strokeWidth="1.700" strokeLinejoin="round" fill="none" d="M8 23.500h3.500l2.500-4.500 4 10 6-15.500 4 13 3-6.500 2 3.500h4" /></> },
  { run: true, art: <><Tile f="url(#dLight)" /><path fill="#2277c8" d="M28.500 10L34 12.500v20L28.500 35 10 18.500l2-2.500z" /><path fill="#3aa0ee" d="M28.500 10L34 12.500v20L28.500 35z" /><path fill="#1a68b8" d="M28.500 10L10 26l2 2.500 16.500-12z" /><path fill="#eef1f5" d="M28.500 17v11L21 22.500z" /></> },
  { art: <><rect x="4.200" y="4.300" width="36" height="35.500" rx="8" fill="#0d4270" /><rect x="5.500" y="5.500" width="33.500" height="33.200" rx="7" fill="#1182d9" /><path fill="#f7fafd" d="M12 8h14l10 9v17q0 2-2 2H12q-2.500 0-2.500-2V10q0-2 2.500-2z" /><path fill="#cfe1f2" d="M26 8h8q2 0 2 2v7z" />
    <path stroke="#1b6db1" strokeWidth="1.700" d="M11.500 14h8M11.500 17h8M11.500 20h8M11.500 24h22M11.500 27.500h22M11.500 31h16" /><path fill="#7fb5de" d="M21 12.500h12v8.500H21z" /><path fill="#333c48" d="M21 21l4-4 3 2 2.500-2 2.500 4z" /></> },
  { art: <><Tile f="url(#dTorr)" /><circle cx="22" cy="22" r="11" fill="#f4f8f5" /><g stroke="#3bbd7b" strokeWidth="1.300" fill="none"><path d="M28 18c-6-3-11 1-10 7s4 7 6 7M29 21c-5-2-9 0-8.500 5s3 5 4.500 5M30 24c-4-1-7 0-6.500 4" /></g><circle cx="32" cy="31.500" r="9" fill="#222" /><path fill="#fff" d="M30.200 28h3.600v4h2.700L32 36l-4.500-4h2.700z" /></> },
  { art: <><Tile f="url(#dMsg)" /><path fill="url(#dBubble)" d="M22.500 11C29.500 11 35 15.500 35 21.300s-5.500 10-12.500 10c-1.500 0-3-.2-4.300-.6-1 1.200-2.200 2.300-4 2.300.6-1.200.9-2.500.7-3.900C12 27.300 10 24.500 10 21.300 10 15.500 15.500 11 22.500 11z" /></> },
  { art: <><Tile f="url(#dVlc)" /><path fill="#fdf6ef" d="M9.500 27.500l7-3h12l7 3-1 2-12 5-12-5z" /><path fill="#fff" d="M22.500 10q2.500 0 3.300 3l4 12q-7.300 4-14.600 0l4-12q.8-3 3.300-3z" /><path fill="#ff9a35" d="M18.500 16.500q4 2 8 0l1 3q-5 2.300-10 0zM15.600 24q7 4 13.800 0l.8 2.500q-7.700 4-15.400 0z" /></> },
  { art: <><Tile f="url(#dLight)" /><path fill="#2acfd1" d="M18 14h9.500v8.500H31L22.700 31 14.500 22.500H18z" /></> },
  { run: true, art: <><Tile f="url(#dGrey)" /><rect x="10" y="11" width="25" height="23" rx="4" fill="#f1f1f1" /><g stroke="#6b6b6b" strokeWidth="1.600" fill="none"><path d="M14.500 18v-4h4M27 14h4v4M31 27v4h-4M18.500 31h-4v-4" /></g><path fill="#5c5c5c" d="M17.500 19.500h3l1-1.500h3l1 1.500h2v7.500h-10z" /><circle cx="22.700" cy="23" r="2.300" fill="#ddd" /></> },
  { art: <><Tile f="#fafafa" /><path stroke="#d6d6d6" d="M6 14h34M6 18.500h34M6 23h34M6 27.500h34M6 32h34M6 36h34" /><path stroke="#eeb1aa" d="M10.500 5v35" /><path stroke="#7c868d" strokeWidth="3.500" d="M34.500 4L24 32" /><path stroke="#b9c3ca" strokeWidth="1.300" d="M34 4L23.500 32" /><path fill="#8d8068" d="M22.300 31.500l3 1.200-5.500 8.300z" /></> },
  { art: <><Tile f="#f9fbfd" />{petals.map((c, i) => <ellipse key={c} cx="22.500" cy="14" rx="4.800" ry="6.800" fill={c} opacity=".88" transform={`rotate(${i * 45} 22.500 22.300)`} />)}</> },
  { art: <><Tile f="#efece4" /><g><rect x="8" y="8" width="29" height="28.500" rx="4" fill="#8ec0ee" /><path fill="#2b3f70" d="M8 17h29v9H8z" /><path fill="#dfe8ee" d="M8 25l29-1.500v9.500q0 3.500-4 3.500H12q-4 0-4-4z" /><path fill="#7c6047" d="M10 35c3-4 9-4 14 1.500z" /></g><circle cx="31" cy="30.500" r="8.500" fill="#a09d96" /><circle cx="31" cy="30.500" r="6.600" fill="#3b3e40" /><circle cx="31" cy="30.500" r="4.800" fill="#b6bec3" /></> },
  { art: <><Tile f="url(#dGrey)" /><rect x="13" y="9" width="18.500" height="26.500" rx="2.500" fill="#424242" /><rect x="15" y="11" width="14.500" height="6" rx="1" fill="#6a6a6a" />{[0, 1, 2].map((r) => [0, 1, 2].map((c) => <circle key={`${r}${c}`} cx={17 + c * 5.200} cy={20.500 + r * 5.200} r="1.700" fill={c === 2 ? "#f19a37" : "#d4d4d4"} />))}</> },
  { art: <><Tile f="url(#dDark)" /><g fill="#ededee">{[0, 120, 240].map((a) => <path key={a} transform={`translate(22.500 22.500) rotate(${a})`} d="M-1 2C-8-.5-9.500-8-3.500-12.500-6-7-4-3 1.500-2z" />)}</g></> },
  { art: <><Tile f="url(#dTerm)" /><path stroke="#fff" strokeWidth="2" fill="none" d="M12.500 15.500l8.500 4.500-8.500 4.500M22.500 24.500h9" /></> },
  { art: <><circle cx="22" cy="22" r="19.800" fill="#1d1d1d" /><path stroke="#d0d0d0" strokeWidth="1.600" fill="none" d="M11 10.500h23v23H11z" /><path stroke="#e6e6e6" strokeWidth="3.200" fill="none" d="M18 22.500h9.500V18q0-2-2-2h-5q-2 0-2 2v8q0 2 2 2h7" /></> },
  { art: <><Tile f="#b4c0c8" /><rect x="6.700" y="6.500" width="31.500" height="31.500" rx="7" fill="#141a1b" /><path stroke="#2d403f" strokeWidth=".7" d="M7 13h31M7 19h31M7 31h31M13 7v31M19 7v31M25 7v31M31 7v31" /><path stroke="#8fc9b8" fill="none" strokeWidth=".9" d="M8 25.500h8l1.500-1.500 1.500 2 1-11 1.500 13 1.500-3.500 2 1h3l2-1.500 2 1.500h5" /></> },
  { art: <><Tile f="url(#dPref)" /><circle cx="22.500" cy="22.300" r="14" fill="none" stroke="#4c5052" strokeWidth="2" /><circle cx="22.500" cy="22.300" r="11" fill="#95999a" stroke="#5c6062" strokeWidth="2" /><path stroke="#43474a" strokeWidth="2.500" d="M22.500 22.300L17 13.500M22.500 22.300h10.500M22.500 22.300L17 31" /><circle cx="22.500" cy="22.300" r="3" fill="#6c7072" /></> },
  { run: true, ml: 6, art: <><rect x="4.500" y="4.300" width="36" height="35.500" rx="8" fill="#0f7134" /><rect x="5.800" y="5.500" width="33.400" height="33.200" rx="7" fill="#21a650" /><path fill="#f4faf5" d="M11 8h15l10.500 9.500V34q0 2-2 2H11q-2 0-2-2V10q0-2 2-2z" /><path fill="#c5e8cf" d="M27 8h8q2 0 2 2v8z" /><path fill="#fff" stroke="#3daa4a" strokeWidth="1.500" d="M12 13h11l8 5v13H12zM12 17h14M12 21h19M12 25.500h19M18 13v18M24.500 17v14" /><path fill="#f9fafc" d="M25 25h10v10H25z" /><path fill="#f56d3a" d="M28 25.500h3v8h-3z" /><path fill="#3d95e8" d="M25.500 29h2.500v4.500h-2.500zM32 27.500h2.500v6H32z" /></> },
  { run: true, art: <g clipPath="url(#tile)"><Tile f="url(#dPurple)" /><path fill="#e9e4fb" d="M5 4h35v8.500H5z" /><circle cx="9.500" cy="9" r="1.500" fill="#e8435a" /><circle cx="14" cy="9" r="1.500" fill="#f3a33a" /><circle cx="18.500" cy="9" r="1.500" fill="#42bf96" /><rect x="25" y="7" width="12" height="3" rx="1.500" fill="#fff" /><g fill="#fff"><rect x="13" y="18.500" width="14" height="13" rx="2" transform="rotate(-8 20 25)" /><path d="M26.500 21.500l6.500-4 .8 11.500-6.300-2.500z" /></g><circle cx="20" cy="25" r="3.800" fill="#6a3ff5" /></g> },
  { ml: 5, art: <><path fill="url(#dTrash)" d="M8.500 8h28l-3 31q-.3 2.500-5 2.500h-12q-4.700 0-5-2.500z" /><ellipse cx="22.500" cy="9" rx="14.200" ry="3.800" fill="#9d9d9d" /><ellipse cx="22.500" cy="9.300" rx="12.500" ry="2.700" fill="#b5b5b5" /><ellipse cx="22.500" cy="39" rx="7" ry="1.500" fill="#8b8b8b" /></> },
];

const Dock = () => (
  <>
    <DockPlate />
    <DockFloor />
    <DockCorner $side="left" />
    <DockCorner $side="right" />
    <DockLayer>
      {dockIcons.map((d, i) => (
        <DockItem key={i} $ml={d.ml}>
          <DockSvg width="44" height="44" viewBox="0 0 44 44">{i === 0 && <Defs />}{d.art}</DockSvg>
          {d.run && <RunDot />}
        </DockItem>
      ))}
      <RuleA />
      <RuleB />
    </DockLayer>
  </>
);

export default function App() {
  return (
    <>
      <GlobalStyle />
      <Screen>
        <MenuBar app="Spectacle" time="12:29 PM" />
        <Browser active={false} />
        <CaptureWindow />
        <Dock />
      </Screen>
    </>
  );
}
